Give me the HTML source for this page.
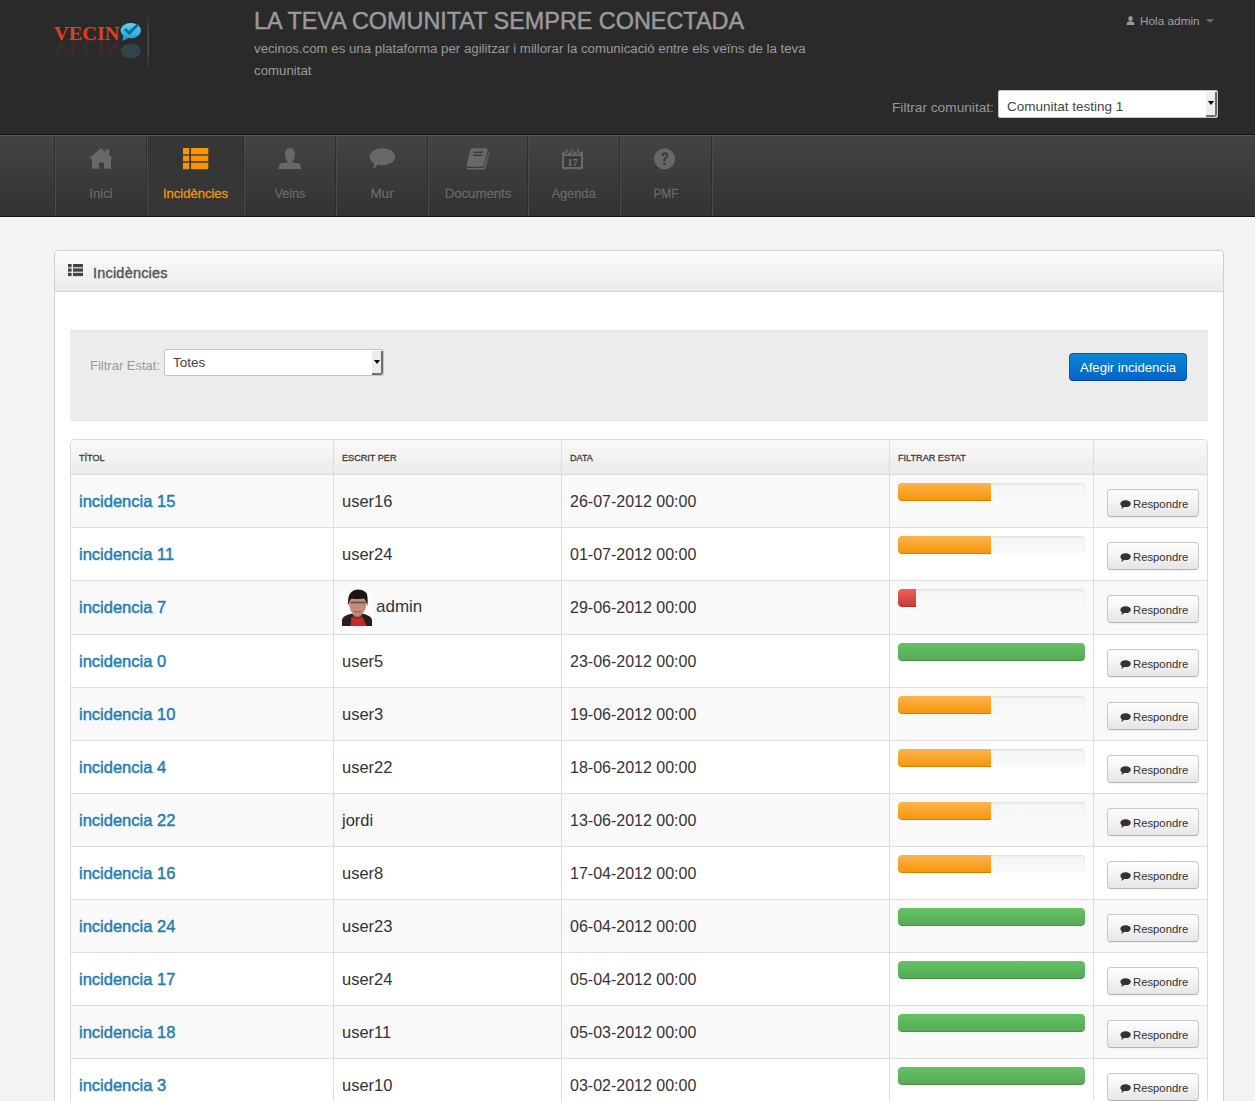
<!DOCTYPE html>
<html><head><meta charset="utf-8">
<style>
*{box-sizing:border-box;margin:0;padding:0}
html,body{width:1255px;height:1101px;overflow:hidden}
body{font-family:"Liberation Sans",sans-serif;background:#f3f3f3;position:relative;color:#333}
.a{position:absolute;white-space:nowrap}
#hdr{position:absolute;left:0;top:0;width:1255px;height:135px;background:#2a2a2a;border-bottom:1px solid #131313}
#nav{position:absolute;left:0;top:135px;width:1255px;height:82px;background:linear-gradient(#444444,#333333);border-top:1px solid #585858;border-bottom:1px solid #121212}
.sep{position:absolute;top:0;width:2px;height:80px;border-left:1px solid #2e2e2e;border-right:1px solid #4b4b4b}
.nl{position:absolute;top:50px;font-size:13px;color:#6b6b6b;text-align:center;line-height:16px;-webkit-text-stroke-width:0.3px;text-shadow:0 1px 1px rgba(0,0,0,.35)}
#panel{position:absolute;left:54px;top:250px;width:1170px;height:900px;background:#fff;border:1px solid #cfcfcf;border-radius:4px}
#ph{position:absolute;left:0;top:0;width:1168px;height:41px;background:linear-gradient(#fbfbfb,#ebebeb);border-bottom:1px solid #d2d2d2;border-radius:4px 4px 0 0}
#well{position:absolute;left:15px;top:79px;width:1138px;height:91px;background:#ececec;border-top:1px solid #e2e2e2}
.sel{position:absolute;background:#fff;border:1px solid #c4c4c4;border-radius:2px}
.selb{position:absolute;right:0;top:1px;width:11px;bottom:0;background:#ececec;border-right:2px solid #6e6e6e;border-bottom:2px solid #6e6e6e;border-bottom-right-radius:3px}
.selb:after{content:"";position:absolute;left:2px;top:8.5px;border-left:3px solid transparent;border-right:3px solid transparent;border-top:4px solid #000}
#tbl{position:absolute;left:70px;top:439px;width:1138px;height:700px;border:1px solid #dcdcdc;border-radius:4px;background:#fff;overflow:hidden}
.th{position:absolute;left:0;top:0;width:1136px;height:35px;background:linear-gradient(#f9f9f9,#ebebeb);border-bottom:1px solid #d9d9d9}
.tht{position:absolute;top:12.3px;font-size:9.3px;font-weight:normal;-webkit-text-stroke:0.3px #3d3d3d;color:#3d3d3d;line-height:12px;transform:scaleX(0.98);transform-origin:0 0}
.row{position:absolute;left:0;width:1136px;border-bottom:1px solid #dddddd}
.odd{background:#f9f9f9}
.vl{position:absolute;top:0;width:1px;height:700px;background:#dddddd}
.lnk{position:absolute;left:8px;font-size:16.5px;font-weight:normal;-webkit-text-stroke:0.45px #1f7db3;color:#1f7db3;line-height:18px}
.usr{position:absolute;left:271px;font-size:16.5px;color:#333;line-height:18px}
.dt{position:absolute;left:499px;font-size:16px;color:#333;line-height:18px}
.prog{position:absolute;left:827px;width:187px;height:18px;border-radius:4px;background:linear-gradient(#f5f5f5,#f9f9f9);box-shadow:inset 0 1px 2px rgba(0,0,0,.1);overflow:hidden}
.bar{position:absolute;left:0;top:0;height:18px;border-radius:4px 0 0 4px;box-shadow:inset 0 -1px 0 rgba(0,0,0,.15)}
.or{background:linear-gradient(#fbb450,#f89406);width:93px}
.rd{background:linear-gradient(#ee5f5b,#c43c35);width:18px}
.gr{background:linear-gradient(#62c462,#57a957);width:187px;border-radius:4px}
.btn{position:absolute;left:1036px;width:92px;height:28px;border:1px solid #c8c8c8;border-bottom-color:#b3b3b3;border-radius:4px;background:linear-gradient(#ffffff,#e6e6e6);box-shadow:inset 0 1px 0 rgba(255,255,255,.2),0 1px 2px rgba(0,0,0,.05)}
.btn span{position:absolute;left:25px;top:7px;font-size:11.3px;color:#333;line-height:14px}
.btn svg{position:absolute;left:12px;top:10px}
</style></head><body>
<div id="hdr">
  <!-- logo -->
  <svg class="a" style="left:50px;top:14px" width="100" height="58" viewBox="0 0 100 58">
    <defs>
      <linearGradient id="bub" x1="0" y1="0" x2="0" y2="1"><stop offset="0" stop-color="#62d2f6"/><stop offset="1" stop-color="#1ca6dd"/></linearGradient>
      <linearGradient id="vl" x1="0" y1="0" x2="0" y2="1"><stop offset="0" stop-color="#444" stop-opacity="0"/><stop offset="0.3" stop-color="#4c4c4c"/><stop offset="0.7" stop-color="#4c4c4c"/><stop offset="1" stop-color="#444" stop-opacity="0"/></linearGradient>
    </defs>
    <text x="4" y="26.4" font-family="Liberation Serif" font-weight="bold" font-size="19.5" fill="#e23f1b" textLength="65.5" lengthAdjust="spacingAndGlyphs">VECIN</text>
    <g transform="translate(0,53) scale(1,-1)" opacity="0.1">
      <text x="4" y="26.4" font-family="Liberation Serif" font-weight="bold" font-size="19.5" fill="#e23f1b" textLength="65.5" lengthAdjust="spacingAndGlyphs">VECIN</text>
    </g>
    <ellipse cx="80.8" cy="16.6" rx="10.2" ry="7.6" fill="url(#bub)"/>
    <path d="M73.5,21 L72.5,27 L79,23.5 Z" fill="#1ca6dd"/>
    <path d="M75,15.3 L79.2,19 L88.5,10" stroke="#1a6a78" stroke-width="2.8" fill="none"/>
    <ellipse cx="80.8" cy="37" rx="10" ry="7.3" fill="#4a8898" opacity="0.28"/>
    <rect x="97.5" y="0" width="1.5" height="57" fill="url(#vl)"/>
  </svg>
  <div class="a" style="left:254px;top:6px;font-size:23.4px;line-height:30px;color:#9b9b9b;-webkit-text-stroke:0.45px #9b9b9b">LA TEVA COMUNITAT SEMPRE CONECTADA</div>
  <div class="a" style="left:254px;top:38px;font-size:13.25px;line-height:22px;color:#9a9a9a;white-space:normal;width:570px">vecinos.com es una plataforma per agilitzar i millorar la comunicació entre els veïns de la teva comunitat</div>
  <svg class="a" style="left:1126px;top:16px" width="9" height="9" viewBox="0 0 9 9"><ellipse cx="4.5" cy="2.6" rx="2.2" ry="2.6" fill="#9a9a9a"/><path d="M0.5,9 L1.2,6.2 Q4.5,4.5 7.8,6.2 L8.5,9 Z" fill="#9a9a9a"/></svg>
  <div class="a" style="left:1140px;top:13px;font-size:11.8px;line-height:16px;color:#a3a3a3">Hola admin</div>
  <div class="a" style="left:1206px;top:19px;width:0;height:0;border-left:4px solid transparent;border-right:4px solid transparent;border-top:4px solid #6a6a6a"></div>
  <div class="a" style="left:892px;top:100px;font-size:13.7px;line-height:16px;color:#999">Filtrar comunitat:</div>
  <div class="sel" style="left:998px;top:90px;width:220px;height:28px"><div class="a" style="left:8px;top:8px;font-size:13.5px;line-height:16px;color:#444">Comunitat testing 1</div><div class="selb"></div></div>
</div>
<div id="nav">
  <div class="sep" style="left:54px"></div>
  <div class="a" style="left:147px;top:0;width:96px;height:80px;background:#363636"></div>
  <div class="sep" style="left:146px"></div>
  <div class="sep" style="left:243px"></div>
  <div class="sep" style="left:335px"></div>
  <div class="sep" style="left:427px"></div>
  <div class="sep" style="left:527px"></div>
  <div class="sep" style="left:619px"></div>
  <div class="sep" style="left:711px"></div>
  <!-- home -->
  <svg class="a" style="left:88px;top:12px" width="26" height="22" viewBox="0 0 26 22"><path d="M0.8,10.3 L13,0.3 L17.6,4 V1.3 H21.2 V7 L25.3,10.3 L23,10.5 V20.8 H16 V14.4 H11 V20.8 H3.9 V10.5 Z" fill="#686868"/></svg>
  <div class="nl" style="left:55px;width:92px;font-size:13.2px">Inici</div>
  <!-- list -->
  <svg class="a" style="left:183px;top:12px" width="26" height="22" viewBox="0 0 26 22"><g fill="#f89406"><rect x="0" y="0" width="6.3" height="6.3"/><rect x="8" y="0" width="17.3" height="6.3"/><rect x="0" y="7.6" width="6.3" height="5.6"/><rect x="8" y="7.6" width="17.3" height="5.6"/><rect x="0" y="14.7" width="6.3" height="6.5"/><rect x="8" y="14.7" width="17.3" height="6.5"/></g></svg>
  <div class="nl" style="left:147px;width:97px;font-size:13px;-webkit-text-stroke:0.35px #f0980e;color:#f0980e">Incidències</div>
  <!-- person -->
  <svg class="a" style="left:278px;top:12px" width="24" height="22" viewBox="0 0 24 22"><path d="M12,0 C8.8,0 7,2.6 7,6.2 C7,9.8 8.6,12.4 9.6,13.4 L9.6,14.6 L2,15.4 L0,21 H23.5 L21.8,15.4 L14.4,14.6 L14.4,13.4 C15.4,12.4 17,9.8 17,6.2 C17,2.6 15.2,0 12,0 Z" fill="#686868"/></svg>
  <div class="nl" style="left:244px;width:92px;font-size:12.6px">Veins</div>
  <!-- bubble -->
  <svg class="a" style="left:369px;top:12px" width="27" height="22" viewBox="0 0 27 22"><path d="M13.5,0.2 C20.5,0.2 26.2,3.9 26.2,8.7 C26.2,13.5 20.5,17.2 13.5,17.2 C11.8,17.2 10.2,17 8.8,16.6 C7.4,18.6 5.2,20.3 3.8,20.8 C4.6,19.4 5.1,17.6 5,15.4 C2.3,13.9 0.8,11.4 0.8,8.7 C0.8,3.9 6.5,0.2 13.5,0.2 Z" fill="#686868"/></svg>
  <div class="nl" style="left:336px;width:92px;font-size:13.5px">Mur</div>
  <!-- book -->
  <svg class="a" style="left:465px;top:12px" width="25" height="22" viewBox="0 0 25 22"><path d="M7,0.3 H21.3 Q23,0.3 22.6,2 L18.8,17.6 Q18.5,18.8 17.2,18.8 H3.4 Q1.3,18.8 1.5,17 L5.3,1.8 Q5.7,0.3 7,0.3 Z" fill="#686868"/><path d="M23.6,4 L24.3,4.8 L20.5,20.4 Q20.1,21.6 18.8,21.6 H3.8 Q1,21.6 0.8,18.5 Q1.6,20 3.5,20 H18 Q19.2,20 19.5,18.8 Z" fill="#686868"/><rect x="9.6" y="3.5" width="9" height="1.6" fill="#3a3a3a" transform="skewX(-12)"/><rect x="9.6" y="6.5" width="9" height="1.6" fill="#3a3a3a" transform="skewX(-12)"/></svg>
  <div class="nl" style="left:428px;width:100px;font-size:13.2px">Documents</div>
  <!-- calendar -->
  <svg class="a" style="left:562px;top:12px" width="21" height="22" viewBox="0 0 21 22"><path d="M1.5,3.5 H19.5 Q21,3.5 21,5 V19.8 Q21,21.2 19.5,21.2 H1.5 Q0,21.2 0,19.8 V5 Q0,3.5 1.5,3.5 Z M2,8.3 V19 H19 V8.3 Z" fill="#686868" fill-rule="evenodd"/><rect x="2" y="8.3" width="17" height="10.7" fill="#393939"/><g stroke="#3a3a3a" stroke-width="1" fill="#686868"><rect x="3.6" y="0" width="2.6" height="6.2" rx="1.3"/><rect x="9.2" y="0" width="2.6" height="6.2" rx="1.3"/><rect x="14.8" y="0" width="2.6" height="6.2" rx="1.3"/></g><text x="10.5" y="17.6" font-family="Liberation Serif" font-weight="bold" font-size="10" fill="#787878" text-anchor="middle">17</text></svg>
  <div class="nl" style="left:520px;width:107px;font-size:12.8px">Agenda</div>
  <!-- question -->
  <svg class="a" style="left:654px;top:12px" width="22" height="22" viewBox="0 0 22 22"><circle cx="10.6" cy="10.8" r="10.5" fill="#686868"/><path d="M7.4,7.5 Q7.6,4.2 11,4.2 Q14.4,4.3 14.4,7.3 Q14.4,9.2 12.4,10.5 Q11.4,11.3 11.5,13.3 H9.3 Q9.2,10.8 10.6,9.6 Q11.9,8.6 11.9,7.4 Q11.9,6.3 10.9,6.3 Q9.8,6.3 9.7,7.9 Z" fill="#3c3c3c"/><rect x="9.2" y="14.6" width="2.5" height="2.4" fill="#3c3c3c"/></svg>
  <div class="nl" style="left:620px;width:92px;font-size:11.9px">PMF</div>
</div>
<div id="panel">
  <div id="ph">
    <svg class="a" style="left:13px;top:13px" width="16" height="13" viewBox="0 0 16 13"><g fill="#444"><rect x="0" y="0" width="3.6" height="3.3"/><rect x="5" y="0" width="10" height="3.3"/><rect x="0" y="4.4" width="3.6" height="3.3"/><rect x="5" y="4.4" width="10" height="3.3"/><rect x="0" y="8.8" width="3.6" height="3.3"/><rect x="5" y="8.8" width="10" height="3.3"/></g></svg>
    <div class="a" style="left:38px;top:14px;font-size:14.5px;line-height:16px;letter-spacing:0.2px;-webkit-text-stroke:0.4px #555;color:#555">Incidències</div>
  </div>
  <div id="well">
    <div class="a" style="left:20px;top:27px;font-size:13px;line-height:16px;color:#9a9a9a">Filtrar Estat:</div>
    <div class="sel" style="left:94px;top:18px;width:220px;height:27px"><div class="a" style="left:8px;top:5px;font-size:13.5px;line-height:16px;color:#444">Totes</div><div class="selb"></div></div>
    <div class="a" style="left:999px;top:22px;width:118px;height:28px;border-radius:4px;background:linear-gradient(#0a88d8,#0462c8);border:1px solid #0559b5;border-bottom-color:#04459a"></div>
    <div class="a" style="left:1010px;top:29px;font-size:13.1px;line-height:16px;color:#fff">Afegir incidencia</div>
  </div>
</div>
<div id="tbl">
<div class="th"><div class="tht" style="left:8px">TÍTOL</div><div class="tht" style="left:271px">ESCRIT PER</div><div class="tht" style="left:499px">DATA</div><div class="tht" style="left:827px">FILTRAR ESTAT</div></div>
<div class="row odd" style="top:35px;height:53px">
<div class="lnk" style="top:17px">incidencia 15</div>
<div class="usr" style="top:17px">user16</div>
<div class="dt" style="top:18px">26-07-2012 00:00</div>
<div class="prog" style="top:8px"><div class="bar or"></div></div>
<div class="btn" style="top:14px"><svg width="11" height="9" viewBox="0 0 11 9"><path d="M5.6,0.3 C8.6,0.3 10.8,1.8 10.8,3.7 C10.8,5.6 8.6,7.1 5.6,7.1 C5,7.1 4.4,7 3.9,6.9 C3.2,7.8 2,8.5 1.2,8.7 C1.7,8 2,7.2 1.9,6.3 C0.9,5.7 0.4,4.8 0.4,3.7 C0.4,1.8 2.6,0.3 5.6,0.3 Z" fill="#333"/></svg><span>Respondre</span></div>
</div>
<div class="row" style="top:88px;height:53px">
<div class="lnk" style="top:17px">incidencia 11</div>
<div class="usr" style="top:17px">user24</div>
<div class="dt" style="top:18px">01-07-2012 00:00</div>
<div class="prog" style="top:8px"><div class="bar or"></div></div>
<div class="btn" style="top:14px"><svg width="11" height="9" viewBox="0 0 11 9"><path d="M5.6,0.3 C8.6,0.3 10.8,1.8 10.8,3.7 C10.8,5.6 8.6,7.1 5.6,7.1 C5,7.1 4.4,7 3.9,6.9 C3.2,7.8 2,8.5 1.2,8.7 C1.7,8 2,7.2 1.9,6.3 C0.9,5.7 0.4,4.8 0.4,3.7 C0.4,1.8 2.6,0.3 5.6,0.3 Z" fill="#333"/></svg><span>Respondre</span></div>
</div>
<div class="row odd" style="top:141px;height:54px">
<div class="lnk" style="top:17px">incidencia 7</div>
<svg class="a" style="left:271px;top:8px" width="30" height="37" viewBox="0 0 30 37">
<rect x="0" y="0" width="30" height="37" fill="#fcfcfc"/>
<path d="M0,37 V30.5 Q1.5,26.5 9,24.8 L21,24.8 Q28.5,26.5 30,30.5 V37 Z" fill="#2a1c20"/>
<path d="M8.5,37 L9.5,27.5 Q15,31 20.5,27.5 L24.5,37 Z" fill="#c42a28"/>
<path d="M11,21 V27 Q15,30 19.5,27 V21 Z" fill="#a86a5c"/>
<path d="M7,11 Q6.8,25.5 15.5,27.2 Q24.5,25.5 24.7,11 Q24,7 15.8,7 Q7.5,7 7,11 Z" fill="#c58c7e"/>
<path d="M6.2,17 Q4.8,4.5 12,1.2 Q19.5,-0.8 24.5,4 Q26.5,9 25.2,17 Q24.2,10.5 21.5,9.5 Q15,10.5 9.8,9.5 Q7,11 6.2,17 Z" fill="#1d1414"/>
<path d="M8.5,13.5 H23.5" stroke="#4a3030" stroke-width="1.6" opacity="0.75"/>
<path d="M12,22.5 Q15.5,23.8 19,22.5" stroke="#8a5046" stroke-width="0.9" fill="none"/>
</svg>
<div class="usr" style="left:305px;top:17px;font-size:17px">admin</div>
<div class="dt" style="top:18px">29-06-2012 00:00</div>
<div class="prog" style="top:8px"><div class="bar rd"></div></div>
<div class="btn" style="top:14px"><svg width="11" height="9" viewBox="0 0 11 9"><path d="M5.6,0.3 C8.6,0.3 10.8,1.8 10.8,3.7 C10.8,5.6 8.6,7.1 5.6,7.1 C5,7.1 4.4,7 3.9,6.9 C3.2,7.8 2,8.5 1.2,8.7 C1.7,8 2,7.2 1.9,6.3 C0.9,5.7 0.4,4.8 0.4,3.7 C0.4,1.8 2.6,0.3 5.6,0.3 Z" fill="#333"/></svg><span>Respondre</span></div>
</div>
<div class="row" style="top:195px;height:53px">
<div class="lnk" style="top:17px">incidencia 0</div>
<div class="usr" style="top:17px">user5</div>
<div class="dt" style="top:18px">23-06-2012 00:00</div>
<div class="prog" style="top:8px"><div class="bar gr"></div></div>
<div class="btn" style="top:14px"><svg width="11" height="9" viewBox="0 0 11 9"><path d="M5.6,0.3 C8.6,0.3 10.8,1.8 10.8,3.7 C10.8,5.6 8.6,7.1 5.6,7.1 C5,7.1 4.4,7 3.9,6.9 C3.2,7.8 2,8.5 1.2,8.7 C1.7,8 2,7.2 1.9,6.3 C0.9,5.7 0.4,4.8 0.4,3.7 C0.4,1.8 2.6,0.3 5.6,0.3 Z" fill="#333"/></svg><span>Respondre</span></div>
</div>
<div class="row odd" style="top:248px;height:53px">
<div class="lnk" style="top:17px">incidencia 10</div>
<div class="usr" style="top:17px">user3</div>
<div class="dt" style="top:18px">19-06-2012 00:00</div>
<div class="prog" style="top:8px"><div class="bar or"></div></div>
<div class="btn" style="top:14px"><svg width="11" height="9" viewBox="0 0 11 9"><path d="M5.6,0.3 C8.6,0.3 10.8,1.8 10.8,3.7 C10.8,5.6 8.6,7.1 5.6,7.1 C5,7.1 4.4,7 3.9,6.9 C3.2,7.8 2,8.5 1.2,8.7 C1.7,8 2,7.2 1.9,6.3 C0.9,5.7 0.4,4.8 0.4,3.7 C0.4,1.8 2.6,0.3 5.6,0.3 Z" fill="#333"/></svg><span>Respondre</span></div>
</div>
<div class="row" style="top:301px;height:53px">
<div class="lnk" style="top:17px">incidencia 4</div>
<div class="usr" style="top:17px">user22</div>
<div class="dt" style="top:18px">18-06-2012 00:00</div>
<div class="prog" style="top:8px"><div class="bar or"></div></div>
<div class="btn" style="top:14px"><svg width="11" height="9" viewBox="0 0 11 9"><path d="M5.6,0.3 C8.6,0.3 10.8,1.8 10.8,3.7 C10.8,5.6 8.6,7.1 5.6,7.1 C5,7.1 4.4,7 3.9,6.9 C3.2,7.8 2,8.5 1.2,8.7 C1.7,8 2,7.2 1.9,6.3 C0.9,5.7 0.4,4.8 0.4,3.7 C0.4,1.8 2.6,0.3 5.6,0.3 Z" fill="#333"/></svg><span>Respondre</span></div>
</div>
<div class="row odd" style="top:354px;height:53px">
<div class="lnk" style="top:17px">incidencia 22</div>
<div class="usr" style="top:17px">jordi</div>
<div class="dt" style="top:18px">13-06-2012 00:00</div>
<div class="prog" style="top:8px"><div class="bar or"></div></div>
<div class="btn" style="top:14px"><svg width="11" height="9" viewBox="0 0 11 9"><path d="M5.6,0.3 C8.6,0.3 10.8,1.8 10.8,3.7 C10.8,5.6 8.6,7.1 5.6,7.1 C5,7.1 4.4,7 3.9,6.9 C3.2,7.8 2,8.5 1.2,8.7 C1.7,8 2,7.2 1.9,6.3 C0.9,5.7 0.4,4.8 0.4,3.7 C0.4,1.8 2.6,0.3 5.6,0.3 Z" fill="#333"/></svg><span>Respondre</span></div>
</div>
<div class="row" style="top:407px;height:53px">
<div class="lnk" style="top:17px">incidencia 16</div>
<div class="usr" style="top:17px">user8</div>
<div class="dt" style="top:18px">17-04-2012 00:00</div>
<div class="prog" style="top:8px"><div class="bar or"></div></div>
<div class="btn" style="top:14px"><svg width="11" height="9" viewBox="0 0 11 9"><path d="M5.6,0.3 C8.6,0.3 10.8,1.8 10.8,3.7 C10.8,5.6 8.6,7.1 5.6,7.1 C5,7.1 4.4,7 3.9,6.9 C3.2,7.8 2,8.5 1.2,8.7 C1.7,8 2,7.2 1.9,6.3 C0.9,5.7 0.4,4.8 0.4,3.7 C0.4,1.8 2.6,0.3 5.6,0.3 Z" fill="#333"/></svg><span>Respondre</span></div>
</div>
<div class="row odd" style="top:460px;height:53px">
<div class="lnk" style="top:17px">incidencia 24</div>
<div class="usr" style="top:17px">user23</div>
<div class="dt" style="top:18px">06-04-2012 00:00</div>
<div class="prog" style="top:8px"><div class="bar gr"></div></div>
<div class="btn" style="top:14px"><svg width="11" height="9" viewBox="0 0 11 9"><path d="M5.6,0.3 C8.6,0.3 10.8,1.8 10.8,3.7 C10.8,5.6 8.6,7.1 5.6,7.1 C5,7.1 4.4,7 3.9,6.9 C3.2,7.8 2,8.5 1.2,8.7 C1.7,8 2,7.2 1.9,6.3 C0.9,5.7 0.4,4.8 0.4,3.7 C0.4,1.8 2.6,0.3 5.6,0.3 Z" fill="#333"/></svg><span>Respondre</span></div>
</div>
<div class="row" style="top:513px;height:53px">
<div class="lnk" style="top:17px">incidencia 17</div>
<div class="usr" style="top:17px">user24</div>
<div class="dt" style="top:18px">05-04-2012 00:00</div>
<div class="prog" style="top:8px"><div class="bar gr"></div></div>
<div class="btn" style="top:14px"><svg width="11" height="9" viewBox="0 0 11 9"><path d="M5.6,0.3 C8.6,0.3 10.8,1.8 10.8,3.7 C10.8,5.6 8.6,7.1 5.6,7.1 C5,7.1 4.4,7 3.9,6.9 C3.2,7.8 2,8.5 1.2,8.7 C1.7,8 2,7.2 1.9,6.3 C0.9,5.7 0.4,4.8 0.4,3.7 C0.4,1.8 2.6,0.3 5.6,0.3 Z" fill="#333"/></svg><span>Respondre</span></div>
</div>
<div class="row odd" style="top:566px;height:53px">
<div class="lnk" style="top:17px">incidencia 18</div>
<div class="usr" style="top:17px">user11</div>
<div class="dt" style="top:18px">05-03-2012 00:00</div>
<div class="prog" style="top:8px"><div class="bar gr"></div></div>
<div class="btn" style="top:14px"><svg width="11" height="9" viewBox="0 0 11 9"><path d="M5.6,0.3 C8.6,0.3 10.8,1.8 10.8,3.7 C10.8,5.6 8.6,7.1 5.6,7.1 C5,7.1 4.4,7 3.9,6.9 C3.2,7.8 2,8.5 1.2,8.7 C1.7,8 2,7.2 1.9,6.3 C0.9,5.7 0.4,4.8 0.4,3.7 C0.4,1.8 2.6,0.3 5.6,0.3 Z" fill="#333"/></svg><span>Respondre</span></div>
</div>
<div class="row" style="top:619px;height:53px">
<div class="lnk" style="top:17px">incidencia 3</div>
<div class="usr" style="top:17px">user10</div>
<div class="dt" style="top:18px">03-02-2012 00:00</div>
<div class="prog" style="top:8px"><div class="bar gr"></div></div>
<div class="btn" style="top:14px"><svg width="11" height="9" viewBox="0 0 11 9"><path d="M5.6,0.3 C8.6,0.3 10.8,1.8 10.8,3.7 C10.8,5.6 8.6,7.1 5.6,7.1 C5,7.1 4.4,7 3.9,6.9 C3.2,7.8 2,8.5 1.2,8.7 C1.7,8 2,7.2 1.9,6.3 C0.9,5.7 0.4,4.8 0.4,3.7 C0.4,1.8 2.6,0.3 5.6,0.3 Z" fill="#333"/></svg><span>Respondre</span></div>
</div>
<div class="vl" style="left:262px"></div>
<div class="vl" style="left:490px"></div>
<div class="vl" style="left:818px"></div>
<div class="vl" style="left:1022px"></div>
</div>
</body></html>
